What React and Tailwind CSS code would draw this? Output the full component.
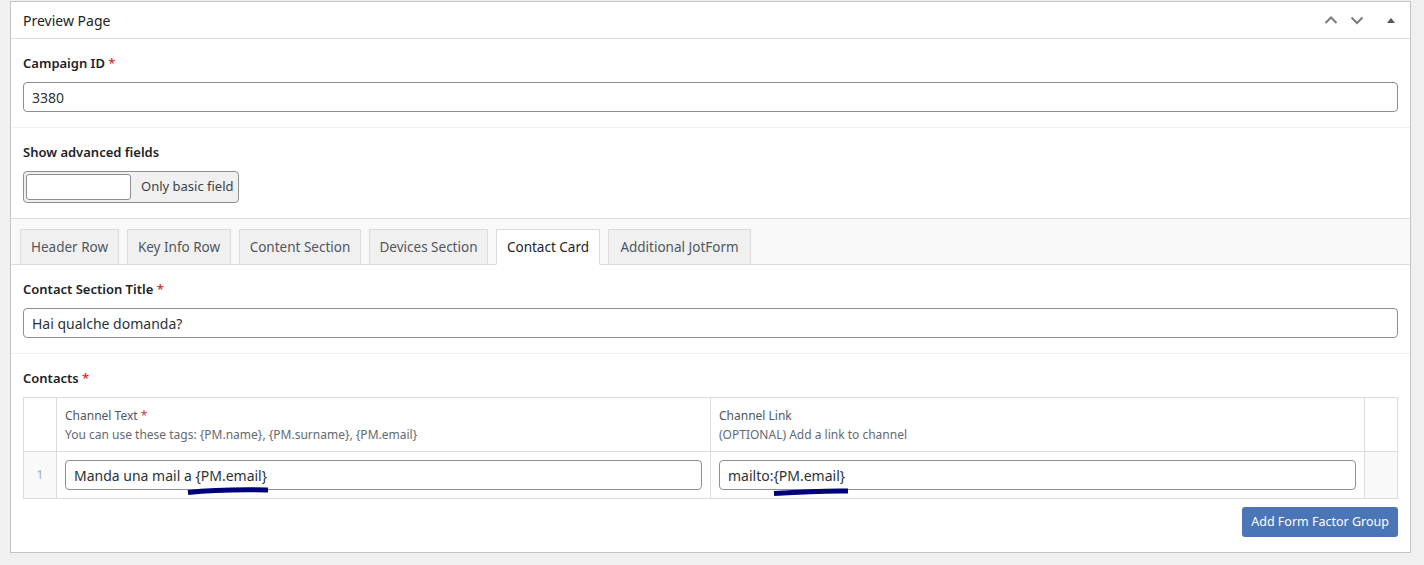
import { useState } from "react";

const font = { fontFamily: '"Noto Sans", "Open Sans", Arial, sans-serif' };

function Label({ text, required }) {
  return (
    <p className="text-[13px] font-semibold leading-[18px] text-[#1d2327]">
      {text}
      {required && <span className="text-[#d63638]"> *</span>}
    </p>
  );
}

function TextInput({ value, className = "" }) {
  return (
    <div
      className={`h-[30px] flex items-center px-[8px] border border-[#8c8f94] rounded-[4px] bg-white text-[14px] text-[#2c3338] ${className}`}
    >
      {value}
    </div>
  );
}

const tabs = [
  { name: "Header Row", w: "w-[99px]" },
  { name: "Key Info Row", w: "w-[104px]" },
  { name: "Content Section", w: "w-[122px]" },
  { name: "Devices Section", w: "w-[119px]" },
  { name: "Contact Card", w: "w-[104px]" },
  { name: "Additional JotForm", w: "w-[143px]" },
];

function Tabs() {
  const [active] = useState("Contact Card");
  return (
    <div className="bg-[#f9f9f9] border-b border-[#dcdcde] pt-[10px] pl-[9px] flex gap-[8px]">
      {tabs.map((t) => (
        <div
          key={t.name}
          className={`${t.w} h-[36px] -mb-px flex items-center justify-center border border-[#dcdcde] text-[13.5px] ${
            active === t.name
              ? "bg-white border-b-white text-[#1d2327]"
              : "bg-[#f0f0f1] text-[#50575e]"
          }`}
        >
          {t.name}
        </div>
      ))}
    </div>
  );
}

export default function App() {
  return (
    <div className="bg-[#f0f0f1] min-h-[565px] pt-[1px] pl-[10px]" style={font}>
      <div className="relative w-[1401px] bg-white border border-[#c3c4c7]">
        <div className="h-[37px] border-b border-[#dcdcde] flex items-center justify-between pl-[12px] pr-[14px]">
          <h2 className="text-[14px] text-[#1d2327]">Preview Page</h2>
          <div className="flex items-center text-[#787c82]">
            <svg width="14" height="14" viewBox="0 0 14 14" className="mr-[12px]">
              <path d="M1.5 10 L7 4.5 L12.5 10" fill="none" stroke="currentColor" strokeWidth="2" />
            </svg>
            <svg width="14" height="14" viewBox="0 0 14 14" className="mr-[22px]">
              <path d="M1.5 4.5 L7 10 L12.5 4.5" fill="none" stroke="currentColor" strokeWidth="2" />
            </svg>
            <svg width="10" height="10" viewBox="0 0 10 10">
              <path d="M1 8 L5 3 L9 8 Z" fill="#50575e" />
            </svg>
          </div>
        </div>

        <div className="px-[12px] pt-[15px] pb-[15px] border-b border-[#f0f0f1]">
          <Label text="Campaign ID" required />
          <TextInput value="3380" className="mt-[10px]" />
        </div>

        <div className="px-[12px] pt-[15px] pb-[15px] border-b border-[#dcdcde]">
          <Label text="Show advanced fields" />
          <div className="mt-[10px] w-[216px] h-[32px] flex items-center border border-[#8c8f94] rounded-[4px] bg-[#f0f0f1] pl-[2px]">
            <div className="w-[105px] h-[26px] bg-white border border-[#8c8f94] rounded-[3px]" />
            <span className="ml-[10px] text-[13px] text-[#3c434a]">Only basic field</span>
          </div>
        </div>

        <Tabs />

        <div className="px-[12px] pt-[15px] pb-[15px] border-b border-[#f0f0f1]">
          <Label text="Contact Section Title" required />
          <TextInput value="Hai qualche domanda?" className="mt-[10px]" />
        </div>

        <div className="px-[12px] pt-[15px] pb-[15px]">
          <Label text="Contacts" required />
          <div className="mt-[10px] border border-[#dcdcde] grid grid-cols-[33px_654px_654px_1fr]">
            <div className="border-r border-b border-[#dcdcde] h-[54px]" />
            <div className="border-r border-b border-[#dcdcde] h-[54px] px-[8px] pt-[8px] text-[12px] leading-[19px]">
              <p className="text-[#50575e]">
                Channel Text <span className="text-[#d63638]">*</span>
              </p>
              <p className="text-[#646970]">
                You can use these tags: {"{PM.name}"}, {"{PM.surname}"}, {"{PM.email}"}
              </p>
            </div>
            <div className="border-r border-b border-[#dcdcde] h-[54px] px-[8px] pt-[8px] text-[12px] leading-[19px]">
              <p className="text-[#50575e]">Channel Link</p>
              <p className="text-[#646970]">(OPTIONAL) Add a link to channel</p>
            </div>
            <div className="border-b border-[#dcdcde] h-[54px]" />

            <div className="border-r border-[#dcdcde] bg-[#f9f9f9] h-[46px] flex items-center justify-center text-[12px] text-[#a7aaad]">
              1
            </div>
            <div className="border-r border-[#dcdcde] px-[8px] flex items-center">
              <TextInput value="Manda una mail a {PM.email}" className="w-full" />
            </div>
            <div className="border-r border-[#dcdcde] px-[8px] flex items-center">
              <TextInput value="mailto:{PM.email}" className="w-full" />
            </div>
            <div className="bg-[#f9f9f9]" />
          </div>
          <div className="flex justify-end mt-[8px]">
            <button className="h-[30px] px-[9px] rounded-[3px] bg-[#4a76b8] text-white text-[12.5px]">
              Add Form Factor Group
            </button>
          </div>
        </div>

        <svg
          className="absolute left-[175px] top-[484px] pointer-events-none"
          width="85"
          height="10"
          viewBox="0 0 85 10"
        >
          <path d="M2 6.5 C25 4, 55 3.5, 82 4" stroke="#00007a" strokeWidth="5" fill="none" />
        </svg>
        <svg
          className="absolute left-[761px] top-[485px] pointer-events-none"
          width="80"
          height="10"
          viewBox="0 0 80 10"
        >
          <path d="M2 6.5 C25 5, 50 3.5, 76 4" stroke="#00007a" strokeWidth="5" fill="none" />
        </svg>
      </div>
    </div>
  );
}
